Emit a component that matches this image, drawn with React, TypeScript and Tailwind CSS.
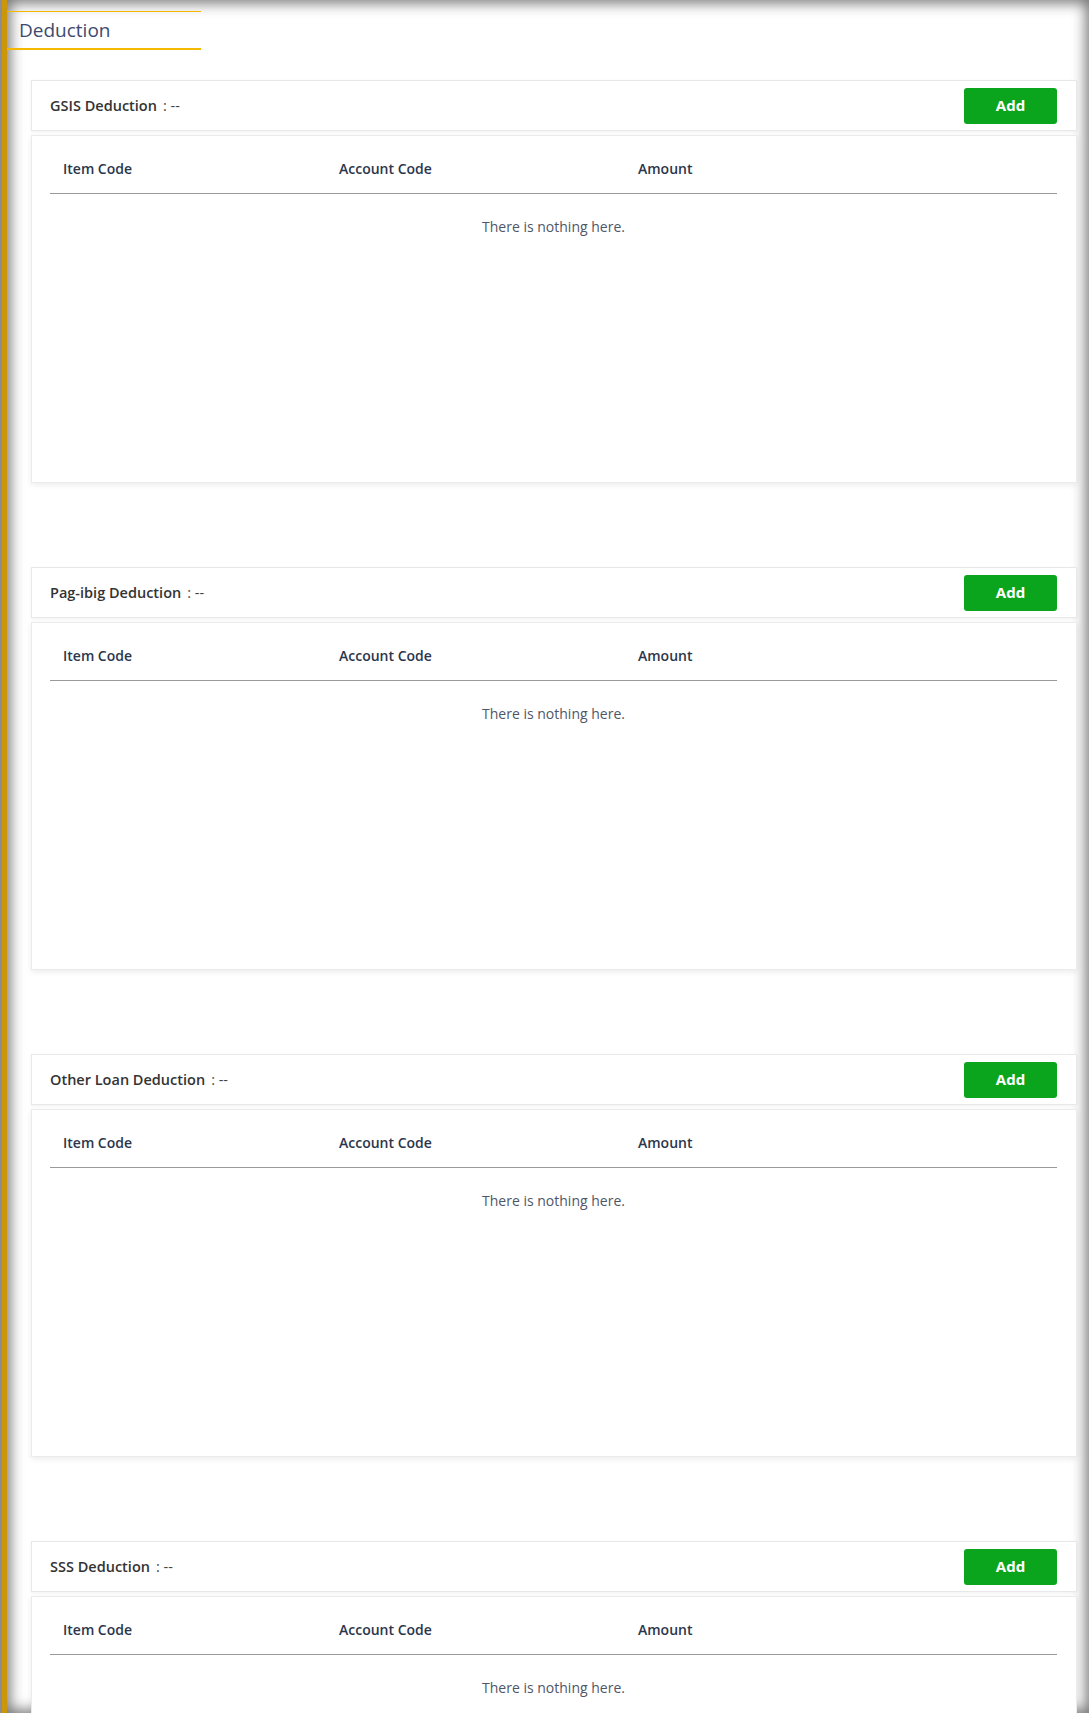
const sections = ["GSIS Deduction", "Pag-ibig Deduction", "Other Loan Deduction", "SSS Deduction"];

function DeductionCard({ title }: { title: string }) {
  return (
    <div>
      <div className="flex h-[51px] items-center justify-between border border-[#e8e8e8] bg-white pl-[18px] pr-[19px] shadow-[0_1px_3px_rgba(0,0,0,0.06)]">
        <div className="text-[14.5px] text-[#333]">
          <span className="font-semibold">{title}</span>
          <span className="ml-[6px] text-[#444]">: --</span>
        </div>
        <button className="h-[36px] w-[93px] rounded-[3px] bg-[#0aa51c] text-[15px] font-bold text-white">
          Add
        </button>
      </div>
      <div className="mt-[4px] h-[348px] border border-[#ebebeb] bg-white pl-[18px] pr-[19px] pt-[8px] shadow-[0_2px_6px_rgba(0,0,0,0.08)]">
        <div className="grid h-[50px] grid-cols-[276px_299px_1fr] items-center border-b border-[#9a9a9a] px-[13px] text-[14px] font-semibold text-[#2b364c]">
          <div>Item Code</div>
          <div>Account Code</div>
          <div>Amount</div>
        </div>
        <p className="pt-[23px] text-center text-[14px] leading-[19px] text-[#4f5666]">There is nothing here.</p>
      </div>
    </div>
  );
}

export default function App() {
  return (
    <div className="h-[1713px] w-full overflow-hidden bg-[#8d8d8d] pl-[2px] font-['Open_Sans',sans-serif]">
      <div className="h-full border-l-[5px] border-[#cc960b] bg-white pt-[11px] shadow-[inset_0_0_14px_3px_rgba(0,0,0,0.55)]">
        {/* title */}
        <div className="flex h-[39px] w-[194px] items-center border-t border-b-2 border-[#f5b800] pl-[12px] text-[19px] text-[#3d4a6e]">
          Deduction
        </div>

        <div className="mt-[30px] flex flex-col gap-[84px] pl-[24px] pr-[12px]">
          {sections.map((s) => (
            <DeductionCard key={s} title={s} />
          ))}
        </div>
      </div>
    </div>
  );
}
